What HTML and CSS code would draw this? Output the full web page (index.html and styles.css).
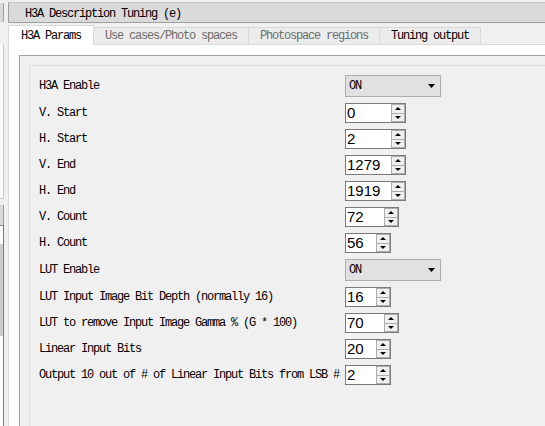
FILE: index.html
```html
<!DOCTYPE html>
<html lang="en">
<head>
  <meta charset="UTF-8">
  <meta name="viewport" content="width=device-width, initial-scale=1.0">
  <title>H3A Description Tuning</title>
  <link rel="stylesheet" href="styles.css">
</head>
<body>

<div class="window">
  <div class="side">
    <div class="side-head"></div>
    <div class="side-list"></div>
    <div class="side-head second"></div>
    <div class="side-panel"><div class="side-scroll"></div></div>
  </div>

  <div class="main">
    <div class="title">H3A Description Tuning (e)</div>

    <div class="tabs">
      <div class="tab active">H3A Params</div>
      <div class="tab disabled">Use cases/Photo spaces</div>
      <div class="tab disabled">Photospace regions</div>
      <div class="tab">Tuning output</div>
    </div>

    <div class="page">
      <div class="frame">
        <div class="form">
          <label>H3A Enable</label>
          <div class="combo"><span>ON</span><svg width="7" height="4" viewBox="0 0 7 4"><polygon points="0,0 7,0 3.5,4" fill="#000"/></svg></div>

          <label>V. Start</label>
          <div class="spin wide"><span class="val">0</span><span class="btns"><i class="up"></i><i class="down"></i></span></div>

          <label>H. Start</label>
          <div class="spin wide"><span class="val">2</span><span class="btns"><i class="up"></i><i class="down"></i></span></div>

          <label>V. End</label>
          <div class="spin wide"><span class="val">1279</span><span class="btns"><i class="up"></i><i class="down"></i></span></div>

          <label>H. End</label>
          <div class="spin wide"><span class="val">1919</span><span class="btns"><i class="up"></i><i class="down"></i></span></div>

          <label>V. Count</label>
          <div class="spin mid"><span class="val">72</span><span class="btns"><i class="up"></i><i class="down"></i></span></div>

          <label>H. Count</label>
          <div class="spin narrow"><span class="val">56</span><span class="btns"><i class="up"></i><i class="down"></i></span></div>

          <label>LUT Enable</label>
          <div class="combo"><span>ON</span><svg width="7" height="4" viewBox="0 0 7 4"><polygon points="0,0 7,0 3.5,4" fill="#000"/></svg></div>

          <label>LUT Input Image Bit Depth (normally 16)</label>
          <div class="spin narrow"><span class="val">16</span><span class="btns"><i class="up"></i><i class="down"></i></span></div>

          <label>LUT to remove Input Image Gamma % (G * 100)</label>
          <div class="spin mid"><span class="val">70</span><span class="btns"><i class="up"></i><i class="down"></i></span></div>

          <label>Linear Input Bits</label>
          <div class="spin narrow"><span class="val">20</span><span class="btns"><i class="up"></i><i class="down"></i></span></div>

          <label>Output 10 out of # of Linear Input Bits from LSB #</label>
          <div class="spin narrow"><span class="val">2</span><span class="btns"><i class="up"></i><i class="down"></i></span></div>
        </div>
      </div>
    </div>
  </div>
</div>

</body>
</html>
```

FILE: styles.css
```css
body {
  margin: 0;
  background-color: #f0f0f0;
  font-family: 'Liberation Mono', monospace;
  font-size: 12px;
  letter-spacing: -1.2px;
  color: #000;
  overflow: hidden;
}

.window {
  display: flex;
  height: 426px;
}

/* left docked panel, mostly cut off */
.side {
  width: 4px;
  margin-right: 4px;
  display: flex;
  flex-direction: column;
}

.side > div {
  box-sizing: border-box;
  border-right: 1px solid #a0a0a0;
}

.side-head {
  margin-top: 3px;
  height: 19px;
  background-color: #dadada;
}

.side-list {
  margin-top: 22px;
  height: 155px;
  background-color: #fbfbfb;
  border-bottom: 1px solid #c8c8c8;
  border-right-color: #c8c8c8 !important;
}

.side-head.second {
  margin-top: 6px;
  height: 20px;
}

.side-panel {
  flex: 1;
  background-color: #fff;
  border-top: 1px solid #7a7a7a;
  border-right-color: #7a7a7a !important;
  padding-top: 18px;
}

.side-scroll {
  height: 92px;
  width: 3px;
  background-color: #cdcdcd;
}

/* main dock widget */
.main {
  flex: 1;
  display: flex;
  flex-direction: column;
  min-width: 0;
}

.title {
  margin-top: 2px;
  height: 21px;
  box-sizing: border-box;
  border-top: 1px solid #c6c6c6;
  border-left: 1px solid #a0a0a0;
  border-bottom: 1px solid #a0a0a0;
  background-color: #dadada;
  padding-left: 16px;
  line-height: 22px;
  white-space: pre;
}

.tabs {
  display: flex;
  align-items: flex-end;
  margin-top: 2px;
}

.tab {
  height: 17px;
  box-sizing: border-box;
  border: 1px solid #d9d9d9;
  border-bottom: none;
  margin-left: -1px;
  padding: 0 11px;
  background-color: #ececec;
  line-height: 17px;
  white-space: pre;
}

.tab.disabled {
  color: #6d6d6d;
}

.tab.active {
  height: 20px;
  margin-left: 0;
  margin-bottom: -1px;
  padding: 0 12px;
  background-color: #fff;
  line-height: 20px;
  position: relative;
  z-index: 1;
}

.page {
  flex: 1;
  display: flex;
  flex-direction: column;
  background-color: #fff;
  border-top: 1px solid #d9d9d9;
  border-left: 1px solid #d9d9d9;
  padding: 10px 0 0 10px;
}

.frame {
  flex: 1;
  display: flex;
  flex-direction: column;
  border-top: 1px solid #a0a0a0;
  border-left: 1px solid #a0a0a0;
  background-color: #f0f0f0;
  padding: 9px 0 0 9px;
}

.form {
  flex: 1;
  display: grid;
  grid-template-columns: 306px auto;
  row-gap: 6px;
  align-items: center;
  justify-items: start;
  align-content: start;
  border-top: 1px solid #dcdcdc;
  border-left: 1px solid #dcdcdc;
  padding: 9px;
}

label {
  white-space: pre;
}

.combo {
  width: 96px;
  height: 22px;
  box-sizing: border-box;
  border: 1px solid #adadad;
  background-color: #e1e1e1;
  display: flex;
  align-items: center;
  justify-content: space-between;
  padding: 0 5px 0 3px;
}

.spin {
  display: flex;
  height: 20px;
  box-sizing: border-box;
  border: 1px solid #7a7a7a;
  background-color: #fff;
}

.spin.wide { width: 61px; }
.spin.mid { width: 54px; }
.spin.narrow { width: 46px; }

.spin .val {
  flex: 1;
  padding-left: 1px;
  font-family: 'Liberation Sans', Arial, sans-serif;
  font-size: 15px;
  letter-spacing: 0;
  line-height: 18px;
}

.spin .btns {
  width: 14px;
  display: flex;
  flex-direction: column;
}

.spin .btns i {
  flex: 1;
  box-sizing: border-box;
  border: 1px solid #adadad;
  background-color: #f0f0f0;
  display: flex;
  align-items: center;
  justify-content: center;
}

.spin .btns i.down {
  border-top: none;
}

.spin .btns i::before {
  content: "";
  border-left: 3px solid transparent;
  border-right: 3px solid transparent;
}

.spin .btns i.up::before {
  border-bottom: 3px solid #000;
}

.spin .btns i.down::before {
  border-top: 3px solid #000;
}
```
